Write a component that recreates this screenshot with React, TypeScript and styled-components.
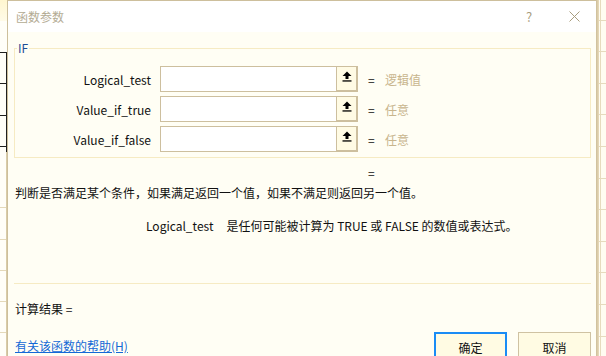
import React from "react";
import styled, { createGlobalStyle } from "styled-components";

const GlobalStyle = createGlobalStyle`
  html, body { margin: 0; padding: 0; }
  body {
    width: 606px;
    height: 356px;
    overflow: hidden;
    font-family: "Noto Sans CJK SC", "Noto Sans", sans-serif;
    font-size: 12px;
    color: #111;
  }
`;

const Page = styled.div`
  display: flex;
  width: 606px;
  height: 356px;
  overflow: hidden;
  background: #fffdf3;
`;

const LeftStrip = styled.div`
  width: 7px;
  flex: none;
  background:
    linear-gradient(#202020, #202020) 6px 52px / 1px 100px no-repeat,
    linear-gradient(#d9cca8, #d9cca8) 6px 152px / 1px 210px no-repeat,
    linear-gradient(#1e1e1e, #1e1e1e) 0 52px / 7px 1px no-repeat,
    linear-gradient(#1e1e1e, #1e1e1e) 0 83px / 7px 1px no-repeat,
    linear-gradient(#1e1e1e, #1e1e1e) 0 115px / 7px 1px no-repeat,
    linear-gradient(#1e1e1e, #1e1e1e) 0 146px / 7px 1px no-repeat,
    repeating-linear-gradient(180deg, transparent 0 30.3px, #e4d9ba 30.3px 31.3px) 0 177px / 7px 200px no-repeat,
    linear-gradient(180deg, #fff6cf, #fffbe8) 0 0 / 7px 21px no-repeat,
    #fffef8;
`;

const RightStrip = styled.div`
  flex: 1;
  background:
    linear-gradient(90deg, #cdbd98, #e9dcbc) 0 0 / 3px 100% no-repeat,
    linear-gradient(#e6dbbd, #e6dbbd) 4px 0 / 1px 100% no-repeat,
    repeating-linear-gradient(180deg, transparent 0 30.6px, #e6dbbd 30.6px 31.6px) 0 -11px,
    #fffcf1;
`;

const Dialog = styled.div`
  width: 588px;
  flex: none;
  display: flex;
  flex-direction: column;
  border-top: 1px solid #cdbf9c;
  border-left: 1px solid #cdbf9c;
  background: #fffef4;
`;

const TitleBar = styled.div`
  height: 31px;
  flex: none;
  display: flex;
  align-items: center;
  background: #ffffff;
  padding-left: 8px;
`;

const Title = styled.div`
  flex: 1;
  color: #b3ab93;
  font-size: 12px;
  line-height: 16px;
`;

const TitleButton = styled.div<{ $w: number }>`
  width: ${(p) => p.$w}px;
  height: 31px;
  display: flex;
  align-items: center;
  justify-content: center;
  color: #a99d7e;
  font-size: 13px;
`;

const Body = styled.div`
  display: flex;
  flex-direction: column;
  padding: 0 5px 0 6px;
`;

const Group = styled.div`
  position: relative;
  margin-top: 16px;
  border: 1px solid #f6ebc3;
  padding: 17px 0 5px 0;
  display: flex;
  flex-direction: column;
  gap: 4px;
`;

const GroupTitle = styled.div`
  position: absolute;
  top: -8px;
  left: 2px;
  padding: 0 1px;
  line-height: 14px;
  font-size: 12px;
  color: #1c4f96;
  background: #fffef4;
`;

const ArgRow = styled.div`
  display: flex;
  align-items: center;
  height: 26px;
`;

const ArgLabel = styled.div`
  width: 136px;
  margin-right: 9px;
  text-align: right;
  color: #111;
`;

const InputBox = styled.div`
  width: 198px;
  height: 26px;
  box-sizing: border-box;
  display: flex;
  border: 1px solid #cdbf9e;
  background: #ffffff;
`;

const Field = styled.div`
  flex: 1;
`;

const PickButton = styled.div`
  width: 21px;
  border-left: 1px solid #cdbf9e;
  background: #fffbe4;
  box-shadow: inset -1px -1px 0 #cdbf9e;
  display: flex;
  justify-content: center;
  align-items: flex-start;
  padding-top: 4px;
  box-sizing: border-box;
`;

const Eq = styled.div`
  margin-left: 10px;
  width: 17px;
  color: #111;
`;

const ArgValue = styled.div`
  color: #c8b58d;
`;

const ResultEq = styled.div`
  margin-top: 7px;
  padding-left: 354px;
  line-height: 16px;
`;

const Description = styled.div`
  margin-top: 4px;
  padding-left: 1px;
  line-height: 16px;
  color: #111;
`;

const ArgHelp = styled.div`
  margin-top: 17px;
  display: flex;
  gap: 13px;
  padding-left: 132px;
  line-height: 16px;
`;

const Separator = styled.div`
  margin-top: 49px;
  height: 1px;
  background: #f6ebc3;
`;

const ResultLine = styled.div`
  margin-top: 17px;
  padding-left: 1px;
  line-height: 16px;
`;

const Footer = styled.div`
  margin-top: 15px;
  display: flex;
  align-items: flex-start;
`;

const HelpLink = styled.a`
  margin-top: 7px;
  margin-left: 1px;
  line-height: 14px;
  color: #1469d6;
  text-decoration: underline;
  flex: 1;
  cursor: pointer;
`;

const Button = styled.div<{ $primary?: boolean }>`
  width: 73px;
  height: 30px;
  box-sizing: border-box;
  margin-left: 11px;
  display: flex;
  align-items: center;
  justify-content: center;
  background: #fffbe3;
  border: ${(p) => (p.$primary ? "2px solid #1a8cf5" : "1px solid #cfc2a2")};
  color: #111;
  font-size: 12px;
`;

const UpArrow = () => (
  <svg width="10" height="11" viewBox="0 0 10 11">
    <path d="M5 0.5 L9.5 5 H6.5 V8 H3.5 V5 H0.5 Z" fill="#000" />
    <rect x="0.5" y="9.3" width="9" height="1.3" fill="#000" />
  </svg>
);

const CloseIcon = () => (
  <svg width="11" height="11" viewBox="0 0 11 11">
    <path d="M0.5 0.5 L10.5 10.5 M10.5 0.5 L0.5 10.5" stroke="#a99d7e" strokeWidth="1" />
  </svg>
);

const args = [
  { name: "Logical_test", value: "逻辑值" },
  { name: "Value_if_true", value: "任意" },
  { name: "Value_if_false", value: "任意" },
];

export default function App() {
  return (
    <>
      <GlobalStyle />
      <Page>
        <LeftStrip />
        <Dialog>
          <TitleBar>
            <Title>函数参数</Title>
            <TitleButton $w={46}>?</TitleButton>
            <TitleButton $w={44}>
              <CloseIcon />
            </TitleButton>
          </TitleBar>
          <Body>
            <Group>
              <GroupTitle>IF</GroupTitle>
              {args.map((a) => (
                <ArgRow key={a.name}>
                  <ArgLabel>{a.name}</ArgLabel>
                  <InputBox>
                    <Field />
                    <PickButton>
                      <UpArrow />
                    </PickButton>
                  </InputBox>
                  <Eq>=</Eq>
                  <ArgValue>{a.value}</ArgValue>
                </ArgRow>
              ))}
            </Group>
            <ResultEq>=</ResultEq>
            <Description>
              判断是否满足某个条件，如果满足返回一个值，如果不满足则返回另一个值。
            </Description>
            <ArgHelp>
              <span>Logical_test</span>
              <span>是任何可能被计算为 TRUE 或 FALSE 的数值或表达式。</span>
            </ArgHelp>
            <Separator />
            <ResultLine>计算结果 =</ResultLine>
            <Footer>
              <HelpLink>有关该函数的帮助(H)</HelpLink>
              <Button $primary>确定</Button>
              <Button>取消</Button>
            </Footer>
          </Body>
        </Dialog>
        <RightStrip />
      </Page>
    </>
  );
}
